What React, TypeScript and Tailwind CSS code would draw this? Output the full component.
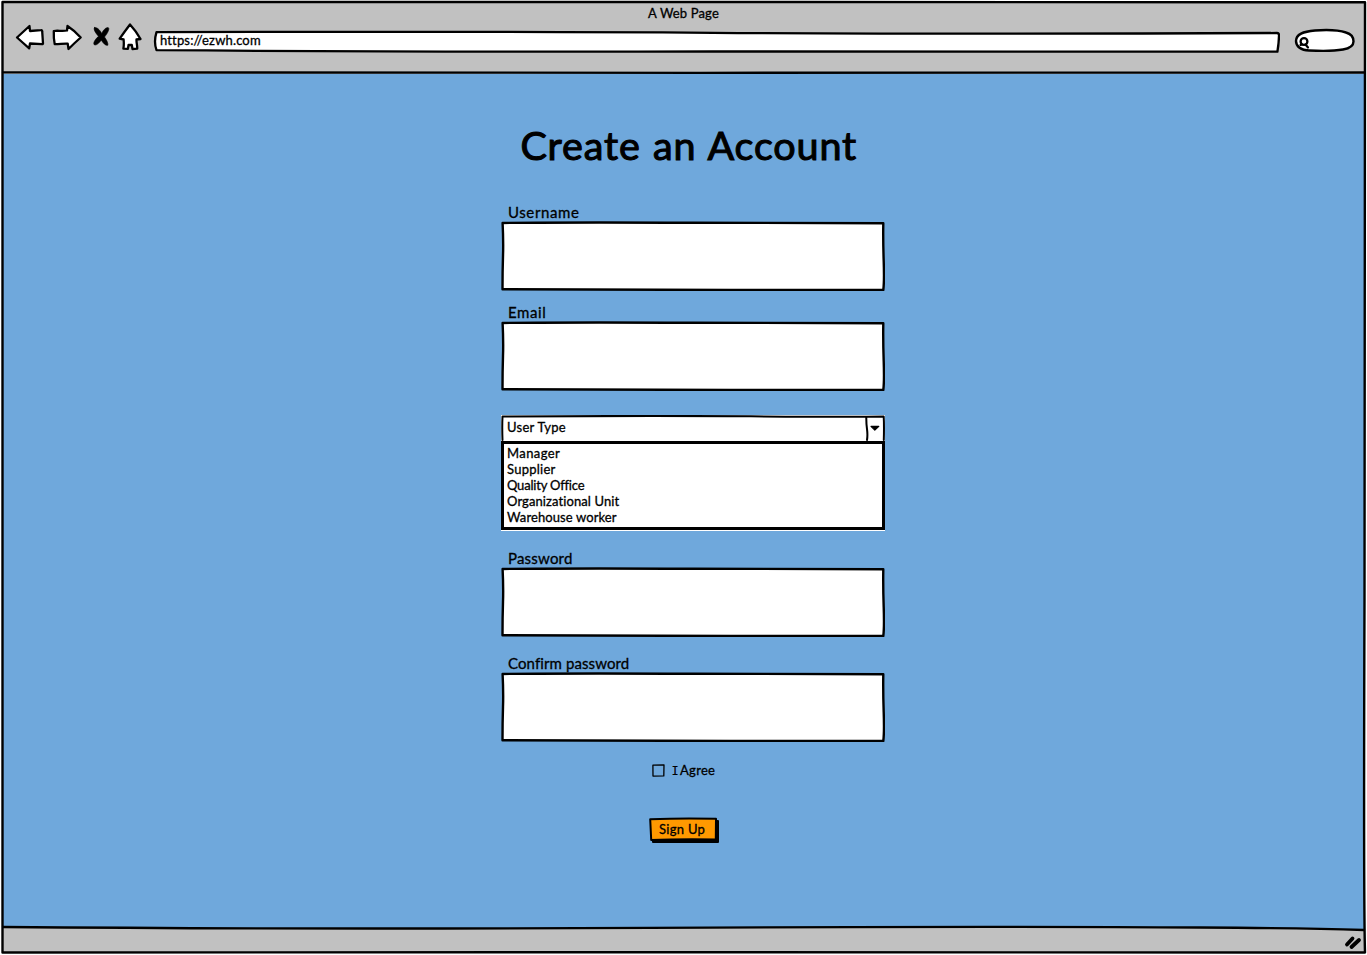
import type { ReactNode } from "react";

const stroke = {
  stroke: "#000",
  strokeLinejoin: "round" as const,
  strokeLinecap: "round" as const,
};

function BackIcon() {
  return (
    <svg className="h-7 w-8 shrink-0" viewBox="0 0 32 28" fill="#fff" strokeWidth="2.3" {...stroke}>
      <path d="M3 14.5 15.5 3l.5 5 11-.8c1-.1 1.2.3 1.2 1.2L29 20.5c0 .5-.4.8-1 .7L16 20.5l-.8 4.8Q8 19 3 14.5Z" />
    </svg>
  );
}

function ForwardIcon() {
  return (
    <svg className="h-7 w-8 shrink-0" viewBox="0 0 32 28" fill="#fff" strokeWidth="2.3" {...stroke}>
      <path d="M1.800 8c3.500-.8 9 .5 13.200-.5L15.500 3q7 4.500 13.200 11.500Q22.500 20 16.500 26l-.8-5.300c-4.500-.2-8.500.5-13 .4Q1.500 15 1.800 8Z" />
    </svg>
  );
}

function StopIcon() {
  return (
    <svg className="h-7 w-5 shrink-0" viewBox="0 0 20 28" strokeWidth="0.6" {...stroke}>
      <path d="M3.500 4.500C6 4 9 7 10.700 10.500 12 7.500 14.500 4.500 17 4.500c2 .7.200 5-3.500 9.500 2.300 3 4 7 3.300 8.300-2.500.5-5-2.800-6.500-5.100C8 20 5.500 22.700 3.300 21.800c-1.600-1.800 1-5.600 4.200-8.500C4.500 10 2 6 3.500 4.500Z" />
    </svg>
  );
}

function HomeIcon() {
  return (
    <svg className="h-7 w-6 shrink-0" viewBox="0 0 24 28" fill="#fff" strokeWidth="2.3" {...stroke}>
      <path d="M12 1.500Q18 8 22.500 16l-4 .5c-.2 3.500 1 6.500.7 9.200l-4.700.3-.7-4-3.200-.2-.7 4-4.500-.2c.6-3 .5-6 .2-9.100L1.700 15.700Q7 8 12 1.500Z" />
    </svg>
  );
}

function SearchPill() {
  return (
    <svg className="h-7 w-16 shrink-0" viewBox="0 0 64 28" fill="#fff" strokeWidth="2.4" {...stroke}>
      <path d="M3 14C3 7 10 4.500 22 3.500c12-.9 24-.3 31 2 5.500 1.500 7.500 5 7.500 9 0 4.500-4.500 7-10.500 8-11 2-24 1.500-34 1C8 23.500 3 19.500 3 14Z" />
      <circle cx="11" cy="14.500" r="3.400" strokeWidth="2.3" />
      <path d="m7.500 18 1.500-.5M12.500 17.500l2.500 3" strokeWidth="2.2" />
    </svg>
  );
}

function SketchBox() {
  return (
    <svg className="h-[70px] w-[384px]" viewBox="0 0 384 70" fill="#fff" {...stroke}>
      <path
        d="M1.600 2Q60 1.100 192 1.700T382.300 2.300Q382 20 382.700 40T382.300 69Q330 69.200 230 69T1.500 68.300Q1.500 50 2 35T1.600 2Z"
        strokeWidth="2.400"
      />
    </svg>
  );
}

function Field({ label, tracking }: { label: string; tracking: string }) {
  return (
    <label className="flex flex-col">
      <span className={`h-[18px] pl-[7.5px] text-[15px] leading-[18px] ${tracking}`}>{label}</span>
      <SketchBox />
    </label>
  );
}

const options = [
  { text: "Manager", tracking: "tracking-[0.4px]" },
  { text: "Supplier", tracking: "tracking-[0.25px]" },
  { text: "Quality Office", tracking: "tracking-[-0.2px]" },
  { text: "Organizational Unit", tracking: "tracking-[0.1px]" },
  { text: "Warehouse worker", tracking: "tracking-[0.1px]" },
];

function UserTypeSelect() {
  return (
    <div className="mt-[24px] flex h-[116px] w-[384px] flex-col bg-white text-[13px]">
      <div className="relative flex h-[26px] items-center pb-px pl-[6.5px]">
        <svg className="absolute inset-0 h-[26px] w-[384px]" viewBox="0 0 384 26" fill="none" {...stroke}>
          <path d="M1.500 25Q1 12 1.500 1.500 150 .5 250 1.300T382.700 1.500Q383.200 10 382.800 25" strokeWidth="2" />
          <path d="M365.300 2Q365.200 8 366 14t0 11" strokeWidth="2" />
          <path d="m370 11.300 3.800 3.800 4-3.800Z" fill="#000" strokeWidth="1.200" />
        </svg>
        <span className="relative tracking-[0.25px]">User Type</span>
      </div>
      <ul className="flex h-[89px] flex-col border-[3px] border-black pt-px pl-[3.5px]">
        {options.map((o) => (
          <li key={o.text} className={`h-4 leading-4 ${o.tracking}`}>
            {o.text}
          </li>
        ))}
      </ul>
    </div>
  );
}

function Agree() {
  return (
    <label className="mt-[18px] flex h-5 items-center gap-[7px] self-start pl-[151px] text-[13px]">
      <svg className="h-[13px] w-[13px]" viewBox="0 0 13 13" fill="none" strokeWidth="1.300" {...stroke}>
        <path d="M.9 1.200 12 .8l-.2 11.100-10.800.2Z" />
      </svg>
      <span className="leading-5 whitespace-pre tracking-[0.3px]">
        <span className="font-['DejaVu_Sans_Mono',monospace] text-[12px] leading-none tracking-[-1.900px] [-webkit-text-stroke:0.1px_black]">I</span>
        {" Agree"}
      </span>
    </label>
  );
}

function SignUp() {
  return (
    <button className="relative mt-[37px] ml-[148px] flex h-[27px] w-[71px] items-center self-start pb-px pl-[10.5px] text-[13px]">
      <svg className="absolute inset-0 h-[27px] w-[71px]" viewBox="0 0 71 27" {...stroke}>
        <path d="M4 5 69 4v21L4 25Z" strokeWidth="2" />
        <path d="M1.200 2.200Q35 .8 67 1.800L66.800 22.500Q30 22 2.200 23Z" fill="#ff9900" strokeWidth="2" />
      </svg>
      <span className="relative tracking-[0.3px]">Sign Up</span>
    </button>
  );
}

function Toolbar() {
  return (
    <header className="flex h-[73px] flex-col bg-[#c1c1c1] text-[13px]">
      <div className="flex h-[22px] items-end justify-center pb-px">
        <span className="h-[18px] leading-[18px] tracking-[0.15px]">A Web Page</span>
      </div>
      <nav className="flex h-9 items-start">
        <div className="flex pl-[12px]">
          <BackIcon />
          <div className="flex pl-[6px]">
            <ForwardIcon />
          </div>
          <div className="flex pl-[7px]">
            <StopIcon />
          </div>
          <div className="flex pl-[7px]">
            <HomeIcon />
          </div>
        </div>
        <div className="relative mt-[7px] ml-[11px] flex h-[23px] w-[1127px] items-center pb-px pl-[7px]">
          <svg className="absolute inset-0 h-[23px] w-[1127px]" viewBox="0 0 1127 23" fill="#fff" {...stroke}>
            <path
              d="M3.500 2.200Q300 1.200 560 2.800T1124 3q2.200.2 2 2.500-.2 8-1.600 16.200Q850 20.800 560 21.500T3.500 20.200Q.5 12 3.500 2.200Z"
              strokeWidth="2.300"
            />
          </svg>
          <span className="relative tracking-[0.15px]">https://ezwh.com</span>
        </div>
        <div className="mt-[4px] ml-[13px] flex">
          <SearchPill />
        </div>
      </nav>
    </header>
  );
}

function WindowFrame({ children }: { children: ReactNode }) {
  return (
    <div className="relative flex h-[955px] w-[1367px] flex-col overflow-hidden bg-white font-['Lato',sans-serif] text-black [-webkit-text-stroke:0.3px_black]">
      <div className="flex h-[952px] w-[1365px] flex-col pt-px pl-[2px]">{children}</div>
      <svg className="pointer-events-none absolute inset-0 h-[955px] w-[1367px]" viewBox="0 0 1367 955" fill="none" {...stroke}>
        <path d="M3 926Q300 929.500 650 927.800T1200 927.500Q1300 928 1364 930V926Z" fill="#6fa8dc" stroke="none" />
        <path
          d="M2.500 2Q500 1.500 800 2T1365 2.300Q1365.500 300 1364.500 600T1365 952.500Q900 953 600 952.200T2.500 952.500Q3 600 2.500 350T2.500 2Z"
          strokeWidth="2.400"
        />
        <path d="M3 72.300Q350 73.700 700 72.800T1364 72.500" strokeWidth="2.300" />
        <path d="M3 927Q300 929.500 650 927.800T1200 927.500Q1300 928 1364 930" strokeWidth="2.300" />
        <path d="m1347 944.500 5.500-6M1351.500 947l7.500-7" strokeWidth="3.800" />
      </svg>
    </div>
  );
}

export default function App() {
  return (
    <WindowFrame>
      <Toolbar />
      <main className="flex flex-1 justify-center bg-[#6fa8dc] pl-[18px]">
        <form className="flex w-[384px] flex-col">
          <h1 className="mt-[46px] h-[50px] pl-[20px] text-[39.5px] leading-[50px] tracking-[0.85px] whitespace-nowrap [-webkit-text-stroke:1.1px_black] [word-spacing:1.5px]">
            Create an Account
          </h1>
          <div className="mt-[33px]">
            <Field label="Username" tracking="tracking-[0.6px]" />
          </div>
          <div className="mt-3">
            <Field label="Email" tracking="tracking-[0.6px]" />
          </div>
          <UserTypeSelect />
          <div className="mt-[18px]">
            <Field label="Password" tracking="tracking-[0.2px]" />
          </div>
          <div className="mt-[17px]">
            <Field label="Confirm password" tracking="tracking-[0.1px]" />
          </div>
          <Agree />
          <SignUp />
        </form>
      </main>
      <footer className="h-[25px] bg-[#c1c1c1]" />
    </WindowFrame>
  );
}
